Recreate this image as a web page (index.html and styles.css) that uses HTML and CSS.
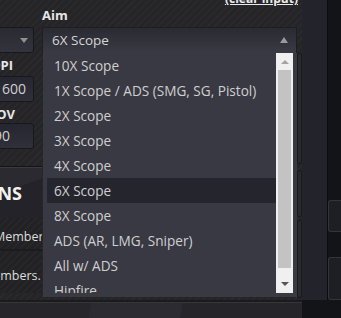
FILE: index.html
```html
<!DOCTYPE html>
<html>
<head>
<meta charset="utf-8">
<link rel="stylesheet" href="styles.css">
</head>
<body>
<div class="page">
  <div class="main">
    <div class="left">
      <div class="lsel"><span class="tri-down"></span></div>
      <div class="lbl lbl-dpi">DPI</div>
      <div class="inp">1600</div>
      <div class="lbl lbl-fov">FOV</div>
      <div class="inp">90</div>
      <div class="sect"><span class="sect-title">OPTIONS</span></div>
      <div class="txt-row"><span class="t1">Member</span></div>
      <div class="txt-row2"><span class="t2">Members. For</span></div>
    </div>
    <div class="center">
      <div class="head">
        <div class="clear">(clear input)</div>
        <div class="lbl aim">Aim</div>
      </div>
      <div class="select">
        <span class="sel-text">6X Scope</span>
        <span class="tri-up"></span>
        <div class="list">
          <ul class="items">
            <li>10X Scope</li>
            <li>1X Scope / ADS (SMG, SG, Pistol)</li>
            <li>2X Scope</li>
            <li>3X Scope</li>
            <li>4X Scope</li>
            <li class="active">6X Scope</li>
            <li>8X Scope</li>
            <li>ADS (AR, LMG, Sniper)</li>
            <li>All w/ ADS</li>
            <li>Hipfire</li>
          </ul>
          <div class="sbar">
            <div class="sbtn"><span class="sb-up"></span></div>
            <div class="strack"><div class="thumb"></div></div>
            <div class="sbtn sbtn-down"><span class="sb-down"></span></div>
          </div>
        </div>
      </div>
      <div class="under">
        <div class="ubox ubox1"></div>
        <div class="ubox ubox2"></div>
        <div class="ubox ubox3"></div>
      </div>
    </div>
    <div class="rpanel"></div>
    <div class="rdark">
      <div class="rbox rbox1"></div>
      <div class="rbox rbox2"></div>
    </div>
  </div>
  <div class="bottom"></div>
</div>
</body>
</html>
```

FILE: styles.css
```css
* { box-sizing: border-box; }
html, body { margin: 0; padding: 0; }
body {
  width: 341px;
  height: 318px;
  overflow: hidden;
  font-family: "Open Sans", "DejaVu Sans", sans-serif;
  font-size: 13px;
  color: #d6d6d6;
  background: #131417;
}
.page {
  width: 341px;
  height: 318px;
  display: flex;
  flex-direction: column;
}
.main {
  display: flex;
  height: 300px;
}
.left, .center {
  background: repeating-linear-gradient(135deg, #2a2a2e 0 1.5px, #252528 1.5px 5px);
}
.left {
  width: 42px;
  overflow: hidden;
  display: flex;
  flex-direction: column;
  padding-top: 27px;
}
.lsel {
  height: 26px;
  margin-left: -4px;
  width: 38px;
  background: linear-gradient(#2a2a33, #33333d);
  border: 1px solid #18181c;
  border-radius: 3px;
  position: relative;
  flex-shrink: 0;
}
.tri-down {
  position: absolute;
  left: 23px;
  top: 10px;
  border-left: 4px solid transparent;
  border-right: 4px solid transparent;
  border-top: 5px solid #8f8f8f;
}
.lbl {
  font-weight: bold;
  color: #e6e6e6;
  font-size: 13px;
  line-height: 16px;
  white-space: nowrap;
}
.lbl-dpi { margin: 4px 0 0 -9px; height: 19px; }
.lbl-fov { margin: 4px 0 0 -11px; height: 17px; }
.inp {
  width: 38px;
  margin-left: -4px;
  height: 26px;
  flex-shrink: 0;
  background: linear-gradient(#262630, #30303a);
  border: 1px solid #18181c;
  border-radius: 3px;
  text-indent: -3px;
  line-height: 24px;
  font-size: 14px;
  color: #d0d0d0;
  white-space: nowrap;
  overflow: hidden;
}
.sect {
  margin-top: 17px;
  height: 52px;
  flex-shrink: 0;
  border-top: 1px solid #141417;
  box-shadow: inset 0 1px 0 #3a3a40;
  background: linear-gradient(160deg, #2a2a30 0 40%, #232329 40% 100%);
  display: flex;
  width: 42px;
}
.sect-title {
  display: flex;
  justify-content: flex-end;
  width: 22px;
  font-weight: bold;
  font-size: 18px;
  color: #f2f2f2;
  padding-top: 14px;
  white-space: nowrap;
}
.txt-row, .txt-row2 {
  white-space: nowrap;
  color: #dcdcdc;
  font-size: 12.5px;
  flex-shrink: 0;
  background: repeating-linear-gradient(135deg, #28282c 0 1.5px, #222225 1.5px 5px);
}
.txt-row { height: 33px; line-height: 37px; border-bottom: 2px solid #1c1c1f; }
.txt-row2 { height: 42px; line-height: 50px; }
.t1 { margin-left: -6px; }
.t2 { margin-left: -18px; }

.center {
  width: 260px;
  display: flex;
  flex-direction: column;
  position: relative;
}
.head {
  height: 27px;
  display: flex;
  flex-direction: column;
}
.clear {
  align-self: flex-end;
  margin-right: 4px;
  margin-top: -8px;
  height: 13px;
  font-weight: bold;
  font-size: 12px;
  color: #eaeaea;
  text-decoration: underline;
  line-height: 13px;
  white-space: nowrap;
}
.aim { margin-top: 2px; height: 16px; }
.select {
  width: 255px;
  height: 26px;
  position: relative;
  background: linear-gradient(#2a2a33, #3a3a44);
  border: 1px solid #1d1d22;
  border-bottom: none;
  z-index: 2;
}
.sel-text {
  position: absolute;
  left: 9px;
  top: 3px;
  font-size: 13.5px;
  color: #d4d4d4;
}
.tri-up {
  position: absolute;
  left: 237px;
  top: 9px;
  border-left: 4px solid transparent;
  border-right: 4px solid transparent;
  border-bottom: 6px solid #9a9a9a;
}
.list {
  position: absolute;
  left: 0;
  top: 25px;
  width: 254px;
  height: 244px;
  background: #393943;
  display: flex;
  padding: 0 4px 4px 4px;
}
.items {
  list-style: none;
  margin: 0;
  padding: 0;
  flex: 1;
  overflow: hidden;
}
.items li {
  height: 25px;
  line-height: 25px;
  padding-left: 7px;
  color: #cfcfcf;
  font-size: 13.6px;
  white-space: nowrap;
}
.items li.active { background: #25252e; }
.sbar {
  width: 17px;
  height: 240px;
  background: #f0f0f0;
  display: flex;
  flex-direction: column;
}
.sbtn {
  height: 17px;
  position: relative;
  flex-shrink: 0;
}
.sb-up {
  position: absolute;
  left: 5px;
  top: 7px;
  border-left: 4px solid transparent;
  border-right: 4px solid transparent;
  border-bottom: 4px solid #a3a3a3;
}
.sb-down {
  position: absolute;
  left: 5px;
  top: 6px;
  border-left: 4px solid transparent;
  border-right: 4px solid transparent;
  border-top: 4px solid #555;
}
.strack { flex: 1; padding: 0 2px; }
.thumb { height: 198px; background: #c3c3c3; }

.under {
  position: absolute;
  left: 255px;
  top: 53px;
  width: 5px;
  display: flex;
  flex-direction: column;
}
.ubox {
  background: #2a2a2e;
  border: 1px solid #1a1a1d;
  border-radius: 2px;
}
.ubox1 { height: 111px; }
.ubox2 { height: 47px; margin-top: 6px; }
.ubox3 { height: 78px; margin-top: 3px; }

.rpanel {
  width: 25px;
  background: #23232c;
}
.rdark {
  width: 14px;
  background: #131417;
  border-left: 1px solid #0c0c0e;
  display: flex;
  flex-direction: column;
}
.rbox {
  background: #1e1f24;
  border: 1px solid #34343a;
  border-right: none;
  border-radius: 3px 0 0 3px;
}
.rbox1 { margin-top: 200px; height: 37px; }
.rbox2 { margin-top: 25px; height: 50px; }
.bottom {
  height: 18px;
  width: 302px;
  background: linear-gradient(100deg, #26262b 0 30%, #2b2b31 30% 60%, #25252a 60%);
  border-top: 2px solid #1b1b1e;
  box-shadow: inset 0 1px 0 #35353b;
}
```
